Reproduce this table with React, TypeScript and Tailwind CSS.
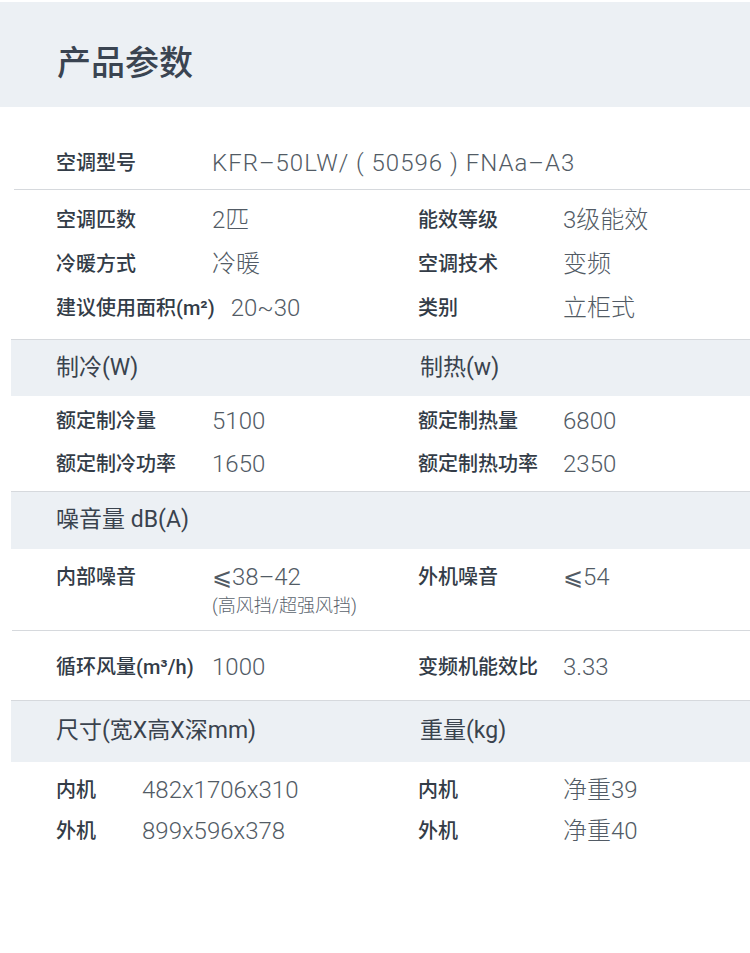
import React from "react";

const FONT = { fontFamily: 'Roboto, "Noto Sans CJK SC", "Noto Sans", sans-serif' };

function Label({ children, wide }: { children: React.ReactNode; wide?: boolean }) {
  return (
    <div
      className={`${wide ? "min-w-[145px]" : "min-w-[156px]"} pr-[16px] text-[20px] font-medium text-[#333c47] whitespace-nowrap`}
    >
      {children}
    </div>
  );
}

function Value({ children }: { children: React.ReactNode }) {
  return <div className="text-[24px] font-light text-[#525b65] whitespace-nowrap">{children}</div>;
}

function Pair({
  l1,
  v1,
  l2,
  v2,
  h = "h-[44px]",
}: {
  l1: React.ReactNode;
  v1: React.ReactNode;
  l2: React.ReactNode;
  v2: React.ReactNode;
  h?: string;
}) {
  return (
    <div className={`flex items-center ${h} pl-[56px]`}>
      <div className="flex items-center w-[362px]">
        <Label>{l1}</Label>
        <Value>{v1}</Value>
      </div>
      <div className="flex items-center">
        <Label wide>{l2}</Label>
        <Value>{v2}</Value>
      </div>
    </div>
  );
}

function Band({ children, h }: { children: React.ReactNode; h: string }) {
  return (
    <div className={`ml-[11px] border-t border-[#d6d9dd] bg-[#ecf0f4] ${h} flex items-center pl-[45px] text-[23px] text-[#3a434e]`}>
      {children}
    </div>
  );
}

export default function App() {
  return (
    <div className="w-[750px] h-[953px] bg-white overflow-hidden" style={FONT}>
      <div className="h-[2px]" />
      <div className="h-[105px] bg-[#ecf0f4] pl-[57px] pt-[44px]">
        <div className="text-[34px] leading-[34px] font-medium text-[#3a4451]">产品参数</div>
      </div>

      <div className="h-[82px] pt-[42px] pl-[56px] flex items-start">
        <div className="flex items-center h-[28px]">
          <Label>空调型号</Label>
          <Value>
            <span className="tracking-[1px]">KFR–50LW/ ( 50596 ) FNAa–A3</span>
          </Value>
        </div>
      </div>
      <div className="ml-[14px] h-px bg-[#d6d9dd]" />

      <div className="pt-[8px] pb-[9px]">
        <Pair l1="空调匹数" v1="2匹" l2="能效等级" v2="3级能效" />
        <Pair l1="冷暖方式" v1="冷暖" l2="空调技术" v2="变频" />
        <Pair l1="建议使用面积(m²)" v1="20~30" l2="类别" v2="立柜式" />
      </div>

      <Band h="h-[57px]">
        <div className="w-[364px]">制冷(W)</div>
        <div>制热(w)</div>
      </Band>

      <div className="pt-[3px] pb-[6px]">
        <Pair l1="额定制冷量" v1="5100" l2="额定制热量" v2="6800" h="h-[43px]" />
        <Pair l1="额定制冷功率" v1="1650" l2="额定制热功率" v2="2350" h="h-[43px]" />
      </div>

      <Band h="h-[58px]">噪音量 dB(A)</Band>

      <div className="pt-[14px] pb-[12px] pl-[56px] flex">
        <div className="flex w-[362px]">
          <Label>
            <div className="h-[28px] flex items-center">内部噪音</div>
          </Label>
          <div>
            <div className="h-[28px] flex items-center">
              <Value>⩽38–42</Value>
            </div>
            <div className="h-[26px] mt-[1px] flex items-center text-[18px] font-light text-[#5b646e]">
              (高风挡/超强风挡)
            </div>
          </div>
        </div>
        <div className="flex items-center h-[28px]">
          <Label wide>外机噪音</Label>
          <Value>⩽54</Value>
        </div>
      </div>
      <div className="ml-[12px] h-px bg-[#d6d9dd]" />

      <div className="pt-[14px] pb-[11px]">
        <Pair l1="循环风量(m³/h)" v1="1000" l2="变频机能效比" v2="3.33" />
      </div>

      <Band h="h-[62px]">
        <div className="w-[364px]">尺寸(宽X高X深mm)</div>
        <div>重量(kg)</div>
      </Band>

      <div className="pt-[7px]">
        <div className="flex items-center h-[41px] pl-[56px]">
          <div className="flex items-center w-[362px]">
            <div className="w-[86px] text-[20px] font-medium text-[#333c47]">内机</div>
            <Value>482x1706x310</Value>
          </div>
          <div className="flex items-center">
            <Label wide>内机</Label>
            <Value>净重39</Value>
          </div>
        </div>
        <div className="flex items-center h-[41px] pl-[56px]">
          <div className="flex items-center w-[362px]">
            <div className="w-[86px] text-[20px] font-medium text-[#333c47]">外机</div>
            <Value>899x596x378</Value>
          </div>
          <div className="flex items-center">
            <Label wide>外机</Label>
            <Value>净重40</Value>
          </div>
        </div>
      </div>
    </div>
  );
}
